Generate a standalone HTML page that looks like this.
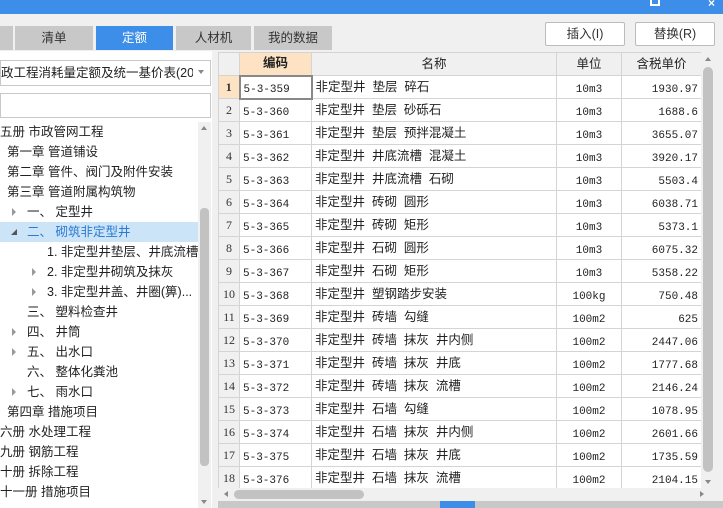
<!DOCTYPE html>
<html><head><meta charset="utf-8"><style>
*{margin:0;padding:0;box-sizing:border-box}
body{width:723px;height:508px;overflow:hidden;background:#f0f0f0;font-family:"Liberation Sans","Noto Sans CJK SC",sans-serif;font-size:12px;color:#222;position:relative}
.a{position:absolute}
.tab{position:absolute;top:26px;height:24px;background:#c8c8c8;text-align:center;line-height:24px;font-size:12.5px;color:#333}
.btn{position:absolute;top:22px;height:24px;background:#fff;border:1px solid #bbb;border-radius:2px;text-align:center;line-height:22px;font-size:12.5px;color:#333}
.tr{position:absolute;left:0;height:20px;line-height:20px;font-size:12.5px;white-space:nowrap;color:#222}
.arr{position:absolute;width:0;height:0;border-left:4px solid #999;border-top:4px solid transparent;border-bottom:4px solid transparent}
table{border-collapse:collapse;position:absolute;left:218px;top:52px;font-size:12.5px;table-layout:fixed}
td{height:23px;line-height:21px;vertical-align:middle;border:1px solid #d4d4d4;background:#fff;white-space:pre;overflow:hidden;padding:0 3px}
td.n{background:#f0f0f0;text-align:center;color:#333;font-family:"Liberation Serif","Noto Serif CJK SC",serif;font-size:12px;padding:0}
td.c,td.u,td.p{font-family:"Liberation Mono",monospace;font-size:11px;line-height:21px}
td.c span,td.u span,td.p span{position:relative;top:3px}
td.u{text-align:center}
td.p{text-align:right}
tr.h td{background:#f0f0f0;text-align:center;height:23px}
</style></head><body>
<div class="a" style="left:0;top:0;width:723px;height:14px;background:#3c8ee8"></div>
<div class="a" style="left:650px;top:0;width:10px;height:6px;border:2px solid #fff;border-top:none"></div>
<div class="a" style="left:708px;top:-4px;color:#fff;font-size:12px;font-weight:bold">×</div>

<div class="tab" style="left:0;width:13px"></div>
<div class="tab" style="left:15px;width:78px">清单</div>
<div class="tab" style="left:96px;width:77px;background:#3c8ee8;color:#fff">定额</div>
<div class="tab" style="left:176px;width:75px">人材机</div>
<div class="tab" style="left:254px;width:78px">我的数据</div>
<div class="btn" style="left:545px;width:80px">插入(I)</div>
<div class="btn" style="left:635px;width:80px">替换(R)</div>

<div class="a" style="left:0;top:51px;width:212px;height:457px;background:#fff"></div>
<div class="a" style="left:0;top:60px;width:211px;height:26px;border:1px solid #c8c8c8;background:#fff;line-height:24px;font-size:12.5px;white-space:nowrap;overflow:hidden"><div style="width:192px;overflow:hidden">政工程消耗量定额及统一基价表(2017</div></div>
<div class="a" style="left:198px;top:70px;border-top:4px solid #888;border-left:3px solid transparent;border-right:3px solid transparent"></div>
<div class="a" style="left:0;top:93px;width:211px;height:25px;border:1px solid #c8c8c8;background:#fff"></div>

<div class="a" style="left:198px;top:122px;width:13px;height:386px;background:#f0f0f0"></div>
<div class="a" style="left:200px;top:208px;width:9px;height:258px;background:#c2c2c2;border-radius:4px"></div>
<div class="a" style="left:201px;top:126px;border-bottom:4px solid #888;border-left:3px solid transparent;border-right:3px solid transparent"></div>
<div class="a" style="left:201px;top:500px;border-top:4px solid #888;border-left:3px solid transparent;border-right:3px solid transparent"></div>
<div class="a" style="left:0;top:222px;width:198px;height:20px;background:#cce4f7"></div>

<div class="tr" style="top:122px">五册 市政管网工程</div>
<div class="tr" style="top:142px;left:7px">第一章 管道铺设</div>
<div class="tr" style="top:162px;left:7px">第二章 管件、阀门及附件安装</div>
<div class="tr" style="top:182px;left:7px">第三章 管道附属构筑物</div>
<div class="arr" style="left:12px;top:208px"></div>
<div class="tr" style="top:202px;left:27px">一、 定型井</div>
<div class="a" style="left:11px;top:229px;border-bottom:6px solid #555;border-left:6px solid transparent"></div>
<div class="tr" style="top:222px;left:27px;color:#2a7ad4">二、 砌筑非定型井</div>
<div class="tr" style="top:242px;left:47px">1. 非定型井垫层、井底流槽</div>
<div class="arr" style="left:32px;top:268px"></div>
<div class="tr" style="top:262px;left:47px">2. 非定型井砌筑及抹灰</div>
<div class="arr" style="left:32px;top:288px"></div>
<div class="tr" style="top:282px;left:47px">3. 非定型井盖、井圈(箅)...</div>
<div class="tr" style="top:302px;left:27px">三、 塑料检查井</div>
<div class="arr" style="left:12px;top:328px"></div>
<div class="tr" style="top:322px;left:27px">四、 井筒</div>
<div class="arr" style="left:12px;top:348px"></div>
<div class="tr" style="top:342px;left:27px">五、 出水口</div>
<div class="tr" style="top:362px;left:27px">六、 整体化粪池</div>
<div class="arr" style="left:12px;top:388px"></div>
<div class="tr" style="top:382px;left:27px">七、 雨水口</div>
<div class="tr" style="top:402px;left:7px">第四章 措施项目</div>
<div class="tr" style="top:422px">六册 水处理工程</div>
<div class="tr" style="top:442px">九册 钢筋工程</div>
<div class="tr" style="top:462px">十册 拆除工程</div>
<div class="tr" style="top:482px">十一册 措施项目</div>

<table>
<colgroup><col style="width:21px"><col style="width:72px"><col style="width:245px"><col style="width:65px"><col style="width:80px"></colgroup>
<tr class="h"><td style="background:#f0f0f0"></td><td style="background:#fde3c4;font-weight:bold">编码</td><td>名称</td><td>单位</td><td>含税单价</td></tr>
<tr><td class="n" style="background:#fde3c4;font-weight:bold">1</td><td class="c" style="border:2px solid #888"><span>5-3-359</span></td><td>非定型井  垫层  碎石</td><td class="u"><span>10m3</span></td><td class="p"><span>1930.97</span></td></tr>
<tr><td class="n">2</td><td class="c"><span>5-3-360</span></td><td>非定型井  垫层  砂砾石</td><td class="u"><span>10m3</span></td><td class="p"><span>1688.6</span></td></tr>
<tr><td class="n">3</td><td class="c"><span>5-3-361</span></td><td>非定型井  垫层  预拌混凝土</td><td class="u"><span>10m3</span></td><td class="p"><span>3655.07</span></td></tr>
<tr><td class="n">4</td><td class="c"><span>5-3-362</span></td><td>非定型井  井底流槽  混凝土</td><td class="u"><span>10m3</span></td><td class="p"><span>3920.17</span></td></tr>
<tr><td class="n">5</td><td class="c"><span>5-3-363</span></td><td>非定型井  井底流槽  石砌</td><td class="u"><span>10m3</span></td><td class="p"><span>5503.4</span></td></tr>
<tr><td class="n">6</td><td class="c"><span>5-3-364</span></td><td>非定型井  砖砌  圆形</td><td class="u"><span>10m3</span></td><td class="p"><span>6038.71</span></td></tr>
<tr><td class="n">7</td><td class="c"><span>5-3-365</span></td><td>非定型井  砖砌  矩形</td><td class="u"><span>10m3</span></td><td class="p"><span>5373.1</span></td></tr>
<tr><td class="n">8</td><td class="c"><span>5-3-366</span></td><td>非定型井  石砌  圆形</td><td class="u"><span>10m3</span></td><td class="p"><span>6075.32</span></td></tr>
<tr><td class="n">9</td><td class="c"><span>5-3-367</span></td><td>非定型井  石砌  矩形</td><td class="u"><span>10m3</span></td><td class="p"><span>5358.22</span></td></tr>
<tr><td class="n">10</td><td class="c"><span>5-3-368</span></td><td>非定型井  塑钢踏步安装</td><td class="u"><span>100kg</span></td><td class="p"><span>750.48</span></td></tr>
<tr><td class="n">11</td><td class="c"><span>5-3-369</span></td><td>非定型井  砖墙  勾缝</td><td class="u"><span>100m2</span></td><td class="p"><span>625</span></td></tr>
<tr><td class="n">12</td><td class="c"><span>5-3-370</span></td><td>非定型井  砖墙  抹灰  井内侧</td><td class="u"><span>100m2</span></td><td class="p"><span>2447.06</span></td></tr>
<tr><td class="n">13</td><td class="c"><span>5-3-371</span></td><td>非定型井  砖墙  抹灰  井底</td><td class="u"><span>100m2</span></td><td class="p"><span>1777.68</span></td></tr>
<tr><td class="n">14</td><td class="c"><span>5-3-372</span></td><td>非定型井  砖墙  抹灰  流槽</td><td class="u"><span>100m2</span></td><td class="p"><span>2146.24</span></td></tr>
<tr><td class="n">15</td><td class="c"><span>5-3-373</span></td><td>非定型井  石墙  勾缝</td><td class="u"><span>100m2</span></td><td class="p"><span>1078.95</span></td></tr>
<tr><td class="n">16</td><td class="c"><span>5-3-374</span></td><td>非定型井  石墙  抹灰  井内侧</td><td class="u"><span>100m2</span></td><td class="p"><span>2601.66</span></td></tr>
<tr><td class="n">17</td><td class="c"><span>5-3-375</span></td><td>非定型井  石墙  抹灰  井底</td><td class="u"><span>100m2</span></td><td class="p"><span>1735.59</span></td></tr>
<tr><td class="n">18</td><td class="c"><span>5-3-376</span></td><td>非定型井  石墙  抹灰  流槽</td><td class="u"><span>100m2</span></td><td class="p"><span>2104.15</span></td></tr>
</table>

<div class="a" style="left:701px;top:52px;width:14px;height:436px;background:#f0f0f0"></div>
<div class="a" style="left:703px;top:67px;width:10px;height:405px;background:#c2c2c2;border-radius:5px"></div>
<div class="a" style="left:705px;top:57px;border-bottom:4px solid #888;border-left:3px solid transparent;border-right:3px solid transparent"></div>
<div class="a" style="left:705px;top:480px;border-top:4px solid #888;border-left:3px solid transparent;border-right:3px solid transparent"></div>
<div class="a" style="left:218px;top:488px;width:497px;height:13px;background:#f0f0f0"></div>
<div class="a" style="left:234px;top:490px;width:130px;height:9px;background:#c2c2c2;border-radius:5px"></div>
<div class="a" style="left:224px;top:491px;border-right:4px solid #888;border-top:3px solid transparent;border-bottom:3px solid transparent"></div>
<div class="a" style="left:700px;top:491px;border-left:4px solid #888;border-top:3px solid transparent;border-bottom:3px solid transparent"></div>
<div class="a" style="left:218px;top:501px;width:505px;height:7px;background:#c8c8c8"></div>
<div class="a" style="left:440px;top:501px;width:35px;height:7px;background:#3c8ee8"></div>
</body></html>
